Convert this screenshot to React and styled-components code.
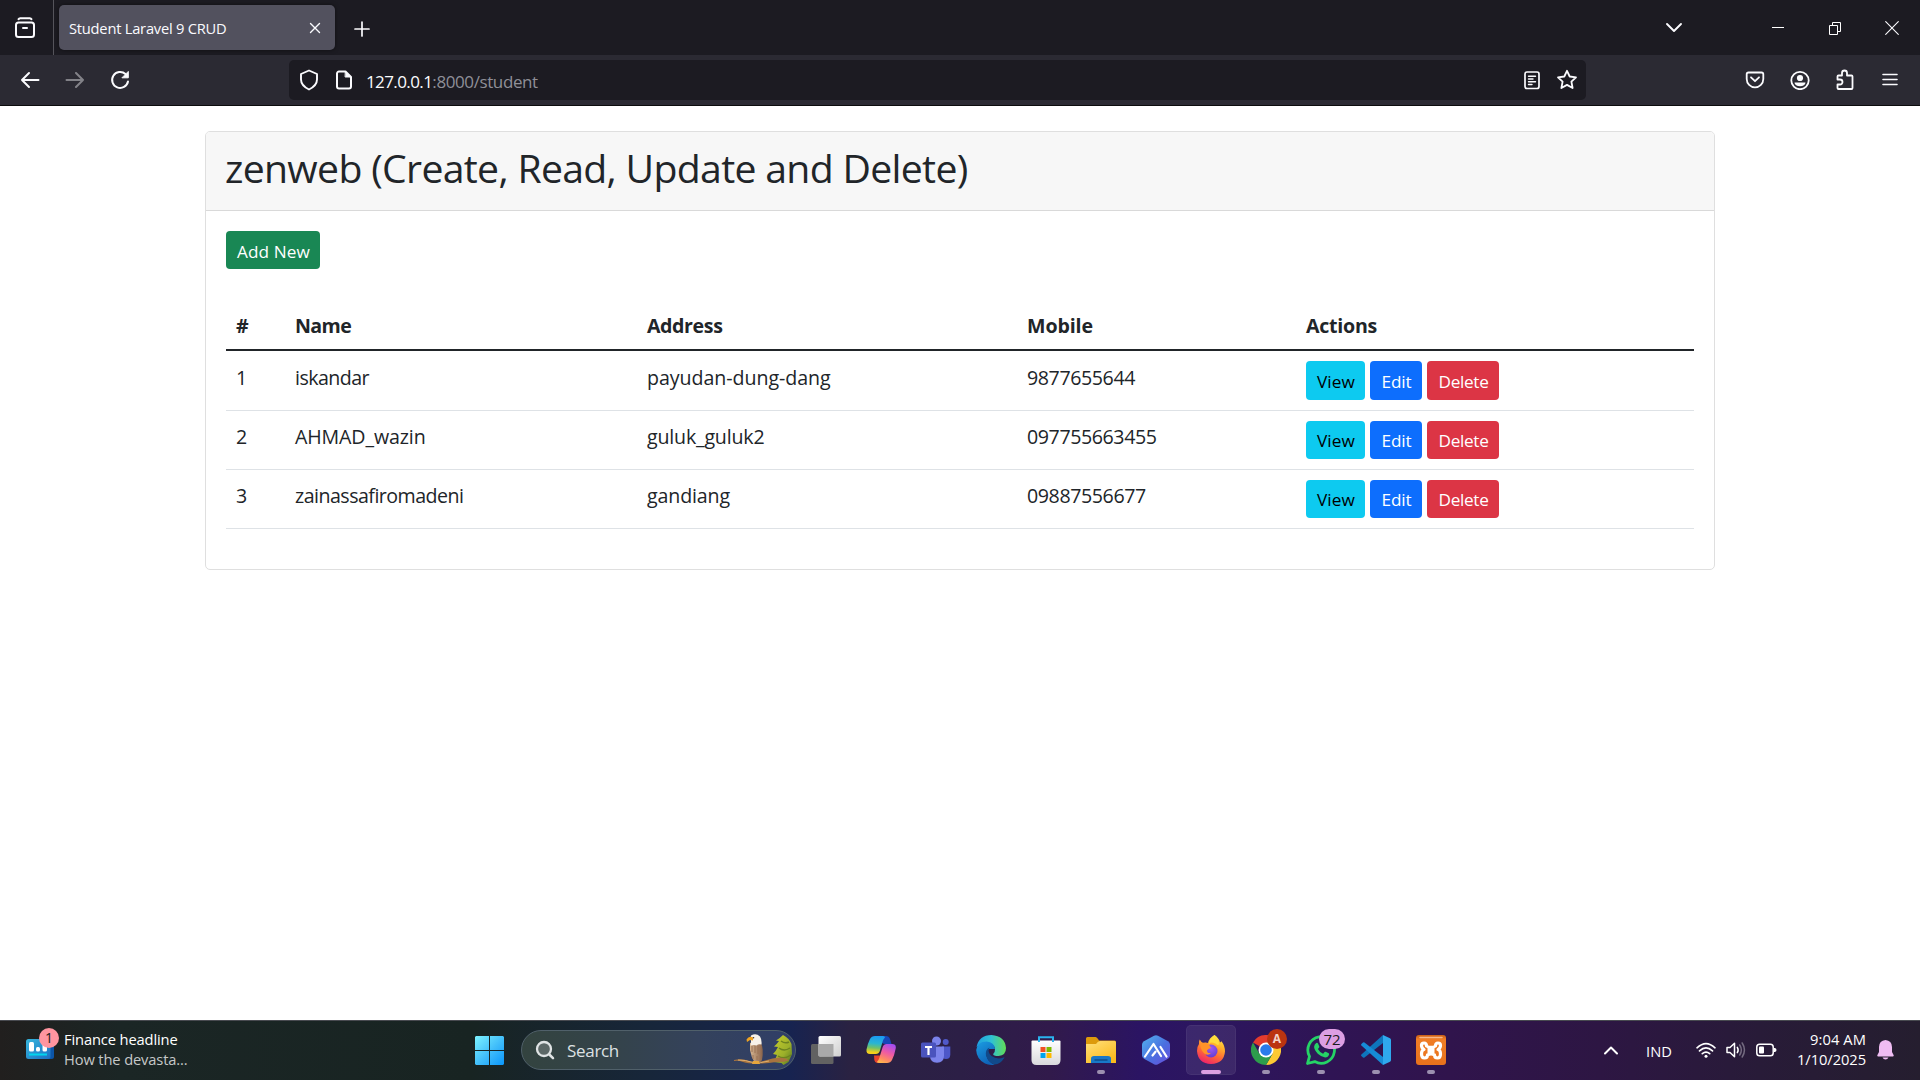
import React from "react";
import styled, { createGlobalStyle } from "styled-components";

const GlobalStyle = createGlobalStyle`
  * { box-sizing: border-box; }
  body {
    margin: 0;
    background: #fff;
    font-family: "Open Sans", "Noto Sans", sans-serif;
    overflow: hidden;
  }
  svg { display: block; flex: none; }
`;

const Screen = styled.div`
  display: flex;
  flex-direction: column;
  width: 1920px;
  height: 1080px;
`;

const Text = styled.span`
  letter-spacing: ${(p) => p.$track || 0}px;
  white-space: nowrap;
`;

/* ---------- Browser chrome ---------- */

const TabStrip = styled.header`
  display: flex;
  align-items: center;
  height: 55px;
  background: #1c1b22;
  color: #fbfbfe;
`;

const TabsOverview = styled.div`
  display: flex;
  align-items: center;
  justify-content: center;
  width: 54px;
  height: 55px;
  padding-right: 3px;
  border-right: 1px solid #55545b;
`;

const Tab = styled.div`
  display: flex;
  align-items: center;
  justify-content: space-between;
  width: 276px;
  height: 45px;
  margin-left: 5px;
  padding: 0 14px 0 10px;
  border-radius: 5px;
  background: #52515e;
  box-shadow: 0 0 4px rgba(0, 0, 0, 0.5);
  font-size: 14.7px;
`;

const NewTab = styled.div`
  display: flex;
  justify-content: center;
  width: 53px;
  padding-top: 2px;
`;

const WindowControls = styled.div`
  display: flex;
  align-items: center;
  margin-left: auto;
`;

const WindowButton = styled.div`
  display: flex;
  align-items: center;
  justify-content: center;
  width: ${(p) => p.$width || 57}px;
  height: 55px;
`;

const NavBar = styled.nav`
  display: flex;
  align-items: center;
  height: 51px;
  padding: 0 8px 0 7px;
  background: #2b2a33;
  border-bottom: 1px solid #0c0c0d;
  color: #fbfbfe;
`;

const NavButton = styled.div`
  display: flex;
  align-items: center;
  justify-content: center;
  width: 45px;
  height: 40px;
  opacity: ${(p) => (p.$disabled ? 0.42 : 1)};
`;

const AddressBar = styled.div`
  display: flex;
  align-items: center;
  width: 1297px;
  height: 40px;
  margin: 0 auto 0 147px;
  padding: 0 2px;
  border-radius: 5px;
  background: #1c1b22;
`;

const AddressIcon = styled.div`
  display: flex;
  align-items: center;
  justify-content: center;
  width: 35px;
`;

const Url = styled.div`
  flex: 1;
  padding: 4px 0 0 5px;
  font-size: 17px;
  line-height: 24px;
  color: #8f8f98;
`;

const Host = styled(Text)`
  color: #fbfbfe;
`;

/* ---------- Page ---------- */

const Page = styled.main`
  flex: 1;
  padding-top: 25px;
  color: #212529;
`;

const Card = styled.section`
  width: 1510px;
  height: 439px;
  margin: 0 auto;
  border: 1px solid #dfdfdf;
  border-radius: 5px;
`;

const CardHeader = styled.div`
  height: 79px;
  padding: 12px 19px 0;
  background: #f7f7f7;
  border-bottom: 1px solid #d9d9d9;
  border-radius: 4px 4px 0 0;
`;

const Title = styled.h2`
  margin: 0;
  font-size: 39.2px;
  font-weight: 400;
  line-height: 48px;
`;

const CardBody = styled.div`
  padding: 20px;
`;

const palette = {
  success: ["#198754", "#fff"],
  info: ["#0dcaf0", "#000"],
  primary: ["#0d6efd", "#fff"],
  danger: ["#dc3545", "#fff"],
};

const Button = styled.a`
  display: flex;
  align-items: center;
  justify-content: center;
  width: ${(p) => p.$width}px;
  height: ${(p) => p.$height || 38}px;
  padding: ${(p) => (p.$height > 38 ? 3 : 2)}px 0 0 1px;
  border-radius: 4px;
  background: ${(p) => palette[p.$kind][0]};
  color: ${(p) => palette[p.$kind][1]};
  font-size: 17.2px;
`;

const Table = styled.table`
  width: 1468px;
  margin-top: 30px;
  table-layout: fixed;
  border-collapse: separate;
  border-spacing: 0;
  font-size: 19.6px;
  line-height: 30px;
`;

const HeadCell = styled.th`
  width: ${(p) => p.$width}px;
  height: 52px;
  padding: 3px 10px 0;
  border-bottom: 2px solid #212529;
  text-align: left;
  font-weight: 700;
`;

const Row = styled.tr`
  height: ${(p) => p.$height}px;
`;

const Cell = styled.td`
  padding: ${(p) => p.$top}px 10px 0;
  border-bottom: 1px solid #dee2e6;
  vertical-align: top;
`;

const Actions = styled.div`
  display: flex;
  gap: 5px;
`;

/* ---------- Taskbar ---------- */

const Taskbar = styled.footer`
  display: flex;
  align-items: center;
  height: 60px;
  padding-bottom: 1px;
  border-top: 1px solid #484a50;
  background: linear-gradient(
    90deg,
    #211f1e 0,
    #1b2625 120px,
    #182422 470px,
    #17263a 650px,
    #172350 790px,
    #2a2242 850px,
    #2c1f46 960px,
    #311a4b 1050px,
    #2b1463 1140px,
    #2c1660 1200px,
    #2f1454 1330px,
    #30144c 1450px,
    #2d1643 1600px,
    #281b38 1760px,
    #251e2f 1920px
  );
  color: #fff;
`;

const Widget = styled.div`
  display: flex;
  align-items: center;
  width: 475px;
  padding-left: 26px;
`;

const WidgetIcon = styled.div`
  position: relative;
  width: 38px;
  height: 40px;
  padding-top: 9px;
`;

const Badge = styled.span`
  position: absolute;
  left: ${(p) => p.$left}px;
  top: ${(p) => p.$top}px;
  width: ${(p) => p.$width || 20}px;
  height: 20px;
  border-radius: 10px;
  background: ${(p) => p.$bg};
  color: ${(p) => p.$color || "#1b1b1b"};
  font-size: ${(p) => p.$size}px;
  font-weight: ${(p) => p.$weight || 400};
  line-height: 20px;
  text-align: center;
`;

const WidgetText = styled.div`
  display: flex;
  flex-direction: column;
  margin-top: -2px;
  font-size: 14.7px;
  line-height: 20px;
`;

const Muted = styled(Text)`
  color: #c5c8c8;
`;

const SearchBox = styled.div`
  display: flex;
  align-items: center;
  width: 275px;
  height: 40px;
  margin: 0 5px 0 17px;
  padding: 0 2px 0 13px;
  border: 1px solid #50606a;
  border-radius: 20px;
  background: linear-gradient(90deg, #33433f 0, #34434b 35%, #34425c 65%, #303e68 100%);
  color: #dde1e3;
  font-size: 17px;

  & > svg:last-child { margin-left: auto; }
`;

const SearchLabel = styled(Text)`
  padding: 1px 0 0 12px;
`;

const Apps = styled.div`
  display: flex;
  gap: 5px;
`;

const AppSlot = styled.div`
  position: relative;
  display: flex;
  align-items: center;
  justify-content: center;
  width: 50px;
  height: 50px;
  border-radius: 5px;
  background: ${(p) => (p.$active ? "rgba(255,255,255,0.08)" : "transparent")};
  box-shadow: ${(p) => (p.$active ? "inset 0 0 0 1px rgba(255,255,255,0.05)" : "none")};
`;

const Running = styled.span`
  position: absolute;
  bottom: 1px;
  left: ${(p) => (p.$active ? 15 : 21)}px;
  width: ${(p) => (p.$active ? 20 : 8)}px;
  height: 4px;
  border-radius: 2px;
  background: ${(p) => (p.$active ? "#dca0e2" : "#9c90b0")};
`;

const Tray = styled.div`
  display: flex;
  align-items: center;
  margin-left: auto;
  padding-right: 26px;
  font-size: 14.7px;
`;

const Language = styled(Text)`
  margin: 1px 24px 0 27px;
`;

const StatusIcons = styled.div`
  display: flex;
  align-items: center;
  gap: 10px;
`;

const Clock = styled.div`
  display: flex;
  flex-direction: column;
  align-items: flex-end;
  width: 89px;
  margin: -2px 11px 0 0;
  line-height: 20px;
`;

/* ---------- Icons ---------- */

const Stroke = ({ w = 20, h = 20, sw = 1.7, children }) => (
  <svg width={w} height={h} viewBox={`0 0 ${w} ${h}`} fill="none" stroke="currentColor" strokeWidth={sw} strokeLinecap="round" strokeLinejoin="round">
    {children}
  </svg>
);

const OverviewIcon = () => (
  <Stroke w={22} h={22} sw={2}>
    <path d="M4.5 2.2Q5 1.2 6.200 1.200H15.800Q17 1.200 17.500 2.200" />
    <rect x="2" y="5.500" width="18" height="14.500" rx="2.500" />
    <path d="M9 11h4" />
  </Stroke>
);

const BackIcon = () => (
  <Stroke sw={2}><path d="M18.500 10H2M9 3 2 10l7 7" /></Stroke>
);
const ForwardIcon = () => (
  <Stroke sw={2}><path d="M1.500 10H18M11 3l7 7-7 7" /></Stroke>
);
const ReloadIcon = () => (
  <Stroke sw={2}>
    <path d="M18 11.500A8 8 0 1 1 15.500 4" />
    <path d="M18.300 1.800v6h-6z" fill="currentColor" strokeWidth="1" />
  </Stroke>
);
const ShieldIcon = () => (
  <Stroke w={20} h={22} sw={1.9}>
    <path d="M10 1.500 18 5v5.500c0 4-3 7.500-8 10-5-2.500-8-6-8-10V5z" />
  </Stroke>
);
const PageIcon = () => (
  <Stroke w={18} h={20} sw={2}>
    <path d="M10.500 1.500H4A2 2 0 0 0 2 3.500v13a2 2 0 0 0 2 2h10a2 2 0 0 0 2-2V7z" />
    <path d="M10.500 1.500 16 7h-5.500z" fill="currentColor" strokeWidth="1" />
  </Stroke>
);
const ReaderIcon = () => (
  <Stroke w={18} h={20}>
    <rect x="2" y="2" width="14" height="16.500" rx="2" />
    <path d="M5.500 6.200h7M5.500 9h4.500M5.500 11.700h7M5.500 14.500h3.500" strokeWidth="1.400" />
  </Stroke>
);
const StarIcon = () => (
  <Stroke w={22} h={22} sw={1.8}>
    <path d="m11 1.800 2.700 5.700 6.300.8-4.600 4.300 1.200 6.400-5.600-3.100-5.600 3.100 1.200-6.400L2 8.300l6.300-.8z" />
  </Stroke>
);
const PocketIcon = () => (
  <Stroke sw={1.8}>
    <path d="M3.500 2.500h13a1.800 1.800 0 0 1 1.800 1.800V9a8.300 8.300 0 0 1-16.600 0V4.300a1.800 1.800 0 0 1 1.800-1.800z" />
    <path d="m6 7.300 4 3.900 4-3.900" />
  </Stroke>
);
const AccountIcon = () => (
  <Stroke w={20} h={20} sw={1.8}>
    <circle cx="10" cy="10.500" r="8.700" />
    <circle cx="10" cy="8" r="3.100" fill="currentColor" stroke="none" />
    <path d="M4.500 12.500h11a5.500 3.800 0 0 1-11 0z" fill="currentColor" stroke="none" />
  </Stroke>
);
const PuzzleIcon = () => (
  <Stroke w={20} h={22} sw={1.8}>
    <path d="M2.500 10.500V7.500Q2.500 6.500 3.500 6.500H7V4a2.500 2.500 0 0 1 5 0v2.500h4.500Q17.500 6.500 17.500 7.500v11.500Q17.500 20 16.500 20h-13Q2.500 20 2.500 19v-3.500H5a2.500 2.500 0 0 0 0-5z" />
  </Stroke>
);
const MenuIcon = () => (
  <Stroke w={18} h={16} sw={1.6}><path d="M2 2.500h14M2 7.500h14M2 12.500h14" /></Stroke>
);
const TabClose = () => (
  <Stroke w={12} h={12} sw={1.4}><path d="m1.500 1.500 9 9m0-9-9 9" /></Stroke>
);
const PlusIcon = () => (
  <Stroke w={16} h={16} sw={1.7}><path d="M8 1v14M1 8h14" /></Stroke>
);
const ChevronDown = () => (
  <Stroke w={18} h={12} sw={1.9}><path d="m2 2 7 7 7-7" /></Stroke>
);
const MinimizeIcon = () => (
  <svg width="14" height="14" viewBox="0 0 14 14"><path d="M1 6h12v1H1z" fill="#fff" /></svg>
);
const RestoreIcon = () => (
  <svg width="14" height="14" viewBox="0 0 14 14" fill="none" stroke="#fff">
    <path d="M1.500 4.500h8v9h-8zM4.500 4.500v-3h8v9h-3" />
  </svg>
);
const CloseIcon = () => (
  <Stroke w={14} h={14} sw={1.1}><path d="m.7.7 12.600 12.600m0-12.600L.7 13.300" /></Stroke>
);

const FinanceIcon = () => (
  <svg width="28" height="20" viewBox="0 0 28 20">
    <defs>
      <linearGradient id="fin" x1="0" y1="0" x2="1" y2="1">
        <stop offset="0" stopColor="#37b6dc" /><stop offset="1" stopColor="#1b6fc4" />
      </linearGradient>
    </defs>
    <rect x="15" y="1" width="13" height="19" rx="2.500" fill="#0b55a8" />
    <rect width="24.500" height="20" rx="2.500" fill="url(#fin)" />
    <rect x="3" y="3" width="5" height="9.500" rx="1.500" fill="#fff" />
    <rect x="10" y="8" width="4" height="4.500" rx="1.500" fill="#fff" />
    <rect x="16.500" y="5" width="4.500" height="7.500" rx="1.500" fill="#fff" />
    <rect x="3" y="14.500" width="18" height="2" fill="#00d5ee" />
  </svg>
);

const StartIcon = () => (
  <svg width="29" height="29" viewBox="0 0 29 29">
    <defs>
      <linearGradient id="win" x1="0" y1="0" x2="29" y2="29" gradientUnits="userSpaceOnUse">
        <stop offset="0" stopColor="#7df3ff" /><stop offset="0.550" stopColor="#3fbcfa" /><stop offset="1" stopColor="#0a96fb" />
      </linearGradient>
    </defs>
    <path d="M1 0h13v14H0V1zM15 0h13l1 1v13H15zM0 15h14v14H1l-1-1zM15 15h14v13l-1 1H15z" fill="url(#win)" />
  </svg>
);

const SearchIcon = () => (
  <svg width="20" height="20" viewBox="0 0 20 20" fill="none" stroke="#dfe3e4" strokeLinecap="round">
    <circle cx="9" cy="9" r="7" strokeWidth="2.300" fill="#5c6867" /><path d="m14.300 14.500 3.700 3.700" strokeWidth="2.500" />
  </svg>
);

const EagleArt = () => (
  <svg width="59" height="32" viewBox="0 0 59 32">
    <defs>
      <linearGradient id="tree" x1="0" y1="0" x2="1" y2="1">
        <stop offset="0" stopColor="#c8cc2c" /><stop offset="0.600" stopColor="#9cb02a" /><stop offset="1" stopColor="#55751f" />
      </linearGradient>
      <linearGradient id="wing" x1="0" y1="0" x2="1" y2="0">
        <stop offset="0" stopColor="#d6b591" /><stop offset="1" stopColor="#8a634a" />
      </linearGradient>
    </defs>
    <path d="M49 1Q45 5 42 6.500l3 .5Q43 10 40 12.500l4 .5Q42 17 39 20l4 1q-1.500 4-3.500 7l8 1 2 2 5-3 3.500-8-.500-10Q55 4 49 1z" fill="url(#tree)" />
    <path d="M47 7q4 3 8 1m-10 6q5 4 11 0m-12 8q6 4 13-1" stroke="#6d8220" strokeWidth="1.500" fill="none" />
    <path d="M0 26q8-2 15 1 7 3 16-.5 8-2.500 14-3 8 .5 10 3-7 2-13 1.500-10 2-20 1.500Q14 29.500 9 28q-5-2-9-1z" fill="#a8743f" />
    <path d="M4 26q8 0 13 2 8 2 18-1" stroke="#dfae6e" fill="none" strokeWidth="1" />
    <path d="M16 9q4-2 11 0 3 6 1 17l-2 3h-5q-4-6-5-13z" fill="url(#wing)" />
    <path d="M18 12v6m3-7v8m3-7v8m-5 1v4m4-3v4" stroke="#9a7354" strokeWidth="1" />
    <path d="M17 1.500q5-3 9 1 2 3 1.500 8-3-1-5 1-3-1-6 0 1-4 0-7z" fill="#f8f2e9" />
    <path d="M19 3.500q-4-2-6.500 2l.5 2.500 3-2 3 .5z" fill="#efa321" />
    <circle cx="19.500" cy="3.700" r=".8" fill="#4a3420" />
    <path d="M19 27h6l1 3h-8z" fill="#e6a53c" />
  </svg>
);

const TaskViewIcon = () => (
  <svg width="30" height="30" viewBox="0 0 30 30">
    <defs>
      <linearGradient id="tv" x1="0" y1="0" x2="1" y2="1">
        <stop offset="0" stopColor="#fff" /><stop offset="1" stopColor="#cfcfcf" />
      </linearGradient>
    </defs>
    <rect x="0" y="9" width="22.500" height="20" rx="1.500" fill="#626262" />
    <rect x="7.500" y="1" width="22.500" height="20.500" rx="1.500" fill="url(#tv)" />
    <rect x="7.500" y="9" width="15" height="12" fill="#a9a9a9" />
  </svg>
);

const CopilotIcon = () => (
  <svg width="30" height="30" viewBox="0 0 30 30">
    <defs>
      <linearGradient id="cpA" x1="0.400" y1="0" x2="0.300" y2="1">
        <stop offset="0" stopColor="#1b9af2" /><stop offset="0.400" stopColor="#29b5d2" /><stop offset="0.650" stopColor="#6fc16a" /><stop offset="0.900" stopColor="#f3cf1c" />
      </linearGradient>
      <linearGradient id="cpB" x1="0.700" y1="0" x2="0.300" y2="1">
        <stop offset="0" stopColor="#a44df0" /><stop offset="0.450" stopColor="#ee5aa5" /><stop offset="0.800" stopColor="#ff8a63" /><stop offset="1" stopColor="#ffb54e" />
      </linearGradient>
    </defs>
    <path d="M16 1h4q3 0 4 3l1.500 5H19q-3 0-4-3z" fill="#1746b8" />
    <path d="M8 20.500h7l-1 5q-1 2.500-3 2.500-2 0-2.700-3z" fill="#e8432e" />
    <path d="M9 1h8q2 0 2 1.500-1.500 1-2.200 3.500l-3 10q-1 3-4 3H4q-4 0-3.500-4.500Q1.500 9 4 4 5.500 1 9 1z" fill="url(#cpA)" />
    <path d="M21 28h-8q-2 0-2-1.200 1.500-1 2.200-3.500l3.500-11.300q1-3 4-3H26q4.500 0 3.700 4.500Q28.500 20 26 25q-1.500 3-5 3z" fill="url(#cpB)" />
  </svg>
);

const TeamsIcon = () => (
  <svg width="30" height="30" viewBox="0 0 30 30">
    <circle cx="24.700" cy="7" r="3" fill="#5059c9" />
    <path d="M21 11.500h8.300v8q0 4.500-4.300 4.500-4 0-4-4z" fill="#4d57c8" />
    <circle cx="15.500" cy="6" r="4.500" fill="#7b83eb" />
    <path d="M9 11.500h14v9q0 7-7 7.300-7-.3-7-7z" fill="#7b83eb" />
    <rect x="0" y="7.500" width="15" height="15" rx="1.500" fill="#4a53bd" />
    <path d="M4 11h7v2H8.600v7H6.400v-7H4z" fill="#fff" />
  </svg>
);

const EdgeIcon = () => (
  <svg width="30" height="30" viewBox="0 0 30 30">
    <defs>
      <linearGradient id="edA" x1="0" y1="0.500" x2="1" y2="0.500">
        <stop offset="0" stopColor="#1f9fe0" /><stop offset="0.500" stopColor="#2fc1d4" /><stop offset="1" stopColor="#62dc55" />
      </linearGradient>
      <linearGradient id="edB" x1="0" y1="0" x2="0.500" y2="1">
        <stop offset="0" stopColor="#1b9de2" /><stop offset="1" stopColor="#0f63b8" />
      </linearGradient>
    </defs>
    <path d="M.5 12Q3 0 15.500 0 29 1 30 13q0 7.500-7.500 8-5.500 0-5.300-2 2-2 1.800-5-.5-4.500-6-5Q4 7.500.5 12z" fill="url(#edA)" />
    <path d="M.2 15Q1 6.500 10.500 6.500q8 .5 8.500 7.500h-6q-4.500 4-1.500 9.500 2 4 7 6.200Q13 30.500 9 28.500.5 24 .2 15z" fill="url(#edB)" />
    <path d="M13.500 12.500q-4.500 2-3.500 8 2 7 8.500 9 6-.5 9.800-6.500.3-1-.8-.5-6.500 2.500-12-1.500-4.500-4-2-8.500z" fill="#114a8b" />
  </svg>
);

const StoreIcon = () => (
  <svg width="30" height="30" viewBox="0 0 30 30">
    <defs>
      <linearGradient id="st" x1="0" y1="0" x2="0" y2="1"><stop offset="0" stopColor="#fff" /><stop offset="1" stopColor="#d9d9dc" /></linearGradient>
    </defs>
    <path d="M.5 6.500q0-1 1-1h27q1 0 1 1V25q0 5-5 5h-19q-5 0-5-5z" fill="url(#st)" />
    <path d="M8 7V2.200h14V7" stroke="#2ab2ee" strokeWidth="2" fill="none" />
    <path d="M9.500 12h5v5h-5z" fill="#f25022" /><path d="M15.500 12h5v5h-5z" fill="#7fba00" />
    <path d="M9.500 18h5v5h-5z" fill="#00a4ef" /><path d="M15.500 18h5v5h-5z" fill="#ffb900" />
  </svg>
);

const FolderIcon = () => (
  <svg width="30" height="30" viewBox="0 0 30 30">
    <defs>
      <linearGradient id="fo" x1="0" y1="0" x2="0.700" y2="1"><stop offset="0" stopColor="#ffe07c" /><stop offset="1" stopColor="#fbbb1c" /></linearGradient>
    </defs>
    <path d="M0 3.500Q0 2 1.500 2h8Q11 2 13 5.500h15.500Q30 5.500 30 7v6H0z" fill="#dd9a0c" />
    <path d="M0 9h10q2-3 4-3h14.500Q30 6 30 7.500v20.500H0z" fill="url(#fo)" />
    <path d="M5 28v-4.500Q5 21 8 21h14q3 0 3 2.500V28z" fill="#1878c8" />
    <path d="M8.500 25h13" stroke="#0c4d8c" strokeWidth="1.500" />
  </svg>
);

const HexIcon = () => (
  <svg width="30" height="30" viewBox="0 0 30 30">
    <defs>
      <linearGradient id="hx" x1="0" y1="0" x2="1" y2="1"><stop offset="0" stopColor="#53b5ee" /><stop offset="0.550" stopColor="#4a6fe0" /><stop offset="1" stopColor="#6a4bdb" /></linearGradient>
    </defs>
    <path d="M13 .7q2-1 4 0l10 5.600q2 1.200 2 3.200v11q0 2-2 3.200l-10 5.600q-2 1-4 0L3 23.700q-2-1.200-2-3.200v-11q0-2 2-3.200z" fill="url(#hx)" />
    <path d="m4 21.500 8.500-12.500 7.500 12M11.500 20.500l3-3.800M19.500 12l6 9.500" stroke="#fff" strokeWidth="2.200" strokeLinecap="round" strokeLinejoin="round" fill="none" />
  </svg>
);

const FirefoxIcon = () => (
  <svg width="30" height="30" viewBox="0 0 30 30">
    <defs>
      <linearGradient id="ff" x1="0.800" y1="0" x2="0.350" y2="1">
        <stop offset="0" stopColor="#fff04a" /><stop offset="0.350" stopColor="#ffb02b" /><stop offset="0.650" stopColor="#ff6a36" /><stop offset="1" stopColor="#ee2469" />
      </linearGradient>
      <radialGradient id="fp" cx="0.500" cy="0.300" r="0.800"><stop offset="0" stopColor="#a05af0" /><stop offset="1" stopColor="#5a3ad0" /></radialGradient>
    </defs>
    <path d="M18.500 0q4.500 3 5.500 7.500l1.500-1.200Q29 11 29 16.500 28 28.500 15 29 2 28.500 1 16 1 11.500 3 9q-.2-3 .7-4.500Q5 7 7 7.800q3.500-.6 5 .2 1-5 6.500-8z" fill="url(#ff)" />
    <circle cx="15" cy="16" r="6.500" fill="url(#fp)" />
    <path d="M4 9q5-2 9 .5L15 13q-3 .5-4 2.500 0 3 4 2.500-2.500 3-6 1-4-2.500-5-10z" fill="#ff9328" />
    <path d="M18.500 0q4 4 4.500 9-1 2-3.500-.5-5-2-6.500.500Q13 3.500 18.500 0z" fill="#ffdd3c" />
  </svg>
);

const ChromeIcon = () => (
  <svg width="30" height="30" viewBox="0 0 30 30">
    <path d="M15 15 2 7.500A15 15 0 0 1 28 7.500H15z" fill="#e33b2e" />
    <path d="M15 7.500h13A15 15 0 0 1 15 30l6.500-11.200z" fill="#fcc934" />
    <path d="M2 7.500A15 15 0 0 0 15 30l6.500-11.200L15 15l-6.500 3.800z" fill="#2d9c4c" />
    <circle cx="15" cy="15" r="7.500" fill="#fff" />
    <circle cx="15" cy="15" r="5.800" fill="#2b7bea" />
  </svg>
);

const WhatsAppIcon = () => (
  <svg width="30" height="30" viewBox="0 0 30 30">
    <path d="m1.500 28.500 2-7.200A13.300 13.300 0 1 1 8.800 26.600z" fill="#2d1a58" stroke="#25d366" strokeWidth="2.800" strokeLinejoin="round" />
    <path d="M10.300 8q1-.6 1.700.4l1.300 3q.2.800-.4 1.400l-1 1.200q1.700 3.200 5.200 4.700l1.500-1.700q.5-.5 1.200-.2l2.900 1.400q.6.400.4 1.200-.9 3-4 3-3.600-.2-7.300-3.600-3.700-3.900-3.700-7Q8.400 9 10.300 8z" fill="#25d366" />
  </svg>
);

const CodeIcon = () => (
  <svg width="30" height="30" viewBox="0 0 30 30">
    <path d="M22 0 29 3.200q1 .5 1 1.800v20q0 1.300-1 1.800L22 30z" fill="#2fa9ee" />
    <path d="M22 0v8L3.500 22.500q-.8.500-1.500 0L.4 21q-.7-.8 0-1.600z" fill="#0e75bd" />
    <path d="M22 30v-8L3.500 7.500Q2.700 7 2 7.500L.4 9q-.7.800 0 1.600z" fill="#168bd6" />
  </svg>
);

const XamppIcon = () => (
  <svg width="30" height="30" viewBox="0 0 30 30">
    <defs><linearGradient id="xa" x1="0" y1="0" x2="0" y2="1"><stop offset="0" stopColor="#c95f16" /><stop offset="0.150" stopColor="#f07d25" /><stop offset="1" stopColor="#e8721c" /></linearGradient></defs>
    <rect width="30" height="30" rx="3" fill="url(#xa)" />
    <path d="M4 2.500h22" stroke="#f7b887" strokeWidth="1.500" strokeLinecap="round" />
    <path d="M10.500 11q0-3-2.500-3t-2.500 2.500T8 14.500q-2.500.5-2.500 4.500t3 4q3 0 3-3 3.500-2 7 0 0 3 3 3t3-4q0-4-2.500-4.500Q24.500 13 24.500 10.500T22 8t-2.500 3q-4.500 3-9 0z" fill="none" stroke="#fff" strokeWidth="3.200" strokeLinejoin="round" />
    <path d="M11.500 15.500h7" stroke="#fff" strokeWidth="5" />
  </svg>
);

const ChevronUp = () => (
  <Stroke w={16} h={10} sw={2}><path d="m2 8.500 6-6 6 6" /></Stroke>
);
const WifiIcon = () => (
  <svg width="20" height="18" viewBox="0 0 20 18" fill="none" stroke="#fff" strokeWidth="1.600" strokeLinecap="round">
    <path d="M1 6.800q9-8.500 18 0M3.500 9.900q6.500-6 13 0M6.300 12.700q3.700-3.300 7.400 0" />
    <circle cx="10" cy="15.300" r="1.500" fill="#fff" stroke="none" />
  </svg>
);
const VolumeIcon = () => (
  <svg width="20" height="18" viewBox="0 0 20 18" fill="none" stroke="#fff" strokeWidth="1.500" strokeLinecap="round" strokeLinejoin="round">
    <path d="M1 6.500h3L8.500 2.300v13.400L4 11.500H1z" />
    <path d="M11.300 6.300q1.700 2.700 0 5.400" />
    <path d="M13.700 4q3.300 5 0 10M16.200 2q4.500 7 0 14" stroke="#746b80" />
  </svg>
);
const BatteryIcon = () => (
  <svg width="21" height="14" viewBox="0 0 21 14" fill="none">
    <rect x=".8" y="1.300" width="16.400" height="11.400" rx="2.800" stroke="#fff" strokeWidth="1.500" />
    <rect x="3" y="3.500" width="5" height="7" rx="1" fill="#fff" />
    <path d="M18 5h1q1.500.3 1.500 2T19 9h-1z" fill="#fff" />
  </svg>
);
const BellIcon = () => (
  <svg width="17" height="20" viewBox="0 0 17 20" fill="#efbcf2">
    <path d="M8.500 0q6.300.5 6.500 7v5l1.700 3.300q.3 1-.7 1.200H1Q0 16.300.3 15.300L2 12V7Q2.200.5 8.500 0zM5.500 17.500h6q-1 2-3 2t-3-2z" />
  </svg>
);

/* ---------- Data ---------- */

const columns = [
  { label: "#", width: 59 },
  { label: "Name", width: 352, track: -0.6 },
  { label: "Address", width: 380, track: -0.4 },
  { label: "Mobile", width: 279, track: -0.09 },
  { label: "Actions", width: 398, track: -0.26 },
];

const students = [
  { height: 60, top: 12, button: 39, cells: [["1"], ["iskandar", -0.55], ["payudan-dung-dang", -0.05], ["9877655644", -0.4]] },
  { height: 59, top: 11, button: 38, cells: [["2"], ["AHMAD_wazin", -0.12], ["guluk_guluk2", -0.18], ["097755663455", -0.41]] },
  { height: 59, top: 11, button: 38, cells: [["3"], ["zainassafiromadeni", -0.52], ["gandiang", -0.13], ["09887556677", -0.4]] },
];

const apps = [
  { name: "taskview", Icon: TaskViewIcon },
  { name: "copilot", Icon: CopilotIcon },
  { name: "teams", Icon: TeamsIcon },
  { name: "edge", Icon: EdgeIcon },
  { name: "store", Icon: StoreIcon },
  { name: "explorer", Icon: FolderIcon, running: true },
  { name: "hex", Icon: HexIcon },
  { name: "firefox", Icon: FirefoxIcon, running: true, active: true },
  { name: "chrome", Icon: ChromeIcon, running: true, badge: { text: "A", left: 26, top: 4, bg: "#bb3410", color: "#f3d3c8", size: 12, weight: 700 } },
  { name: "whatsapp", Icon: WhatsAppIcon, running: true, badge: { text: "72", left: 23, top: 4, width: 26, bg: "#dc9fe3", size: 15 } },
  { name: "code", Icon: CodeIcon, running: true },
  { name: "xampp", Icon: XamppIcon, running: true },
];

export default function App() {
  return (
    <Screen>
      <GlobalStyle />
      <TabStrip>
        <TabsOverview><OverviewIcon /></TabsOverview>
        <Tab>
          <Text $track={-0.23}>Student Laravel 9 CRUD</Text>
          <TabClose />
        </Tab>
        <NewTab><PlusIcon /></NewTab>
        <WindowControls>
          <WindowButton $width={150}><ChevronDown /></WindowButton>
          <WindowButton><MinimizeIcon /></WindowButton>
          <WindowButton><RestoreIcon /></WindowButton>
          <WindowButton><CloseIcon /></WindowButton>
        </WindowControls>
      </TabStrip>

      <NavBar>
        <NavButton><BackIcon /></NavButton>
        <NavButton $disabled><ForwardIcon /></NavButton>
        <NavButton><ReloadIcon /></NavButton>
        <AddressBar>
          <AddressIcon><ShieldIcon /></AddressIcon>
          <AddressIcon><PageIcon /></AddressIcon>
          <Url><Host $track={-0.6}>127.0.0.1</Host><Text $track={-0.4}>:8000/student</Text></Url>
          <AddressIcon><ReaderIcon /></AddressIcon>
          <AddressIcon><StarIcon /></AddressIcon>
        </AddressBar>
        <NavButton><PocketIcon /></NavButton>
        <NavButton><AccountIcon /></NavButton>
        <NavButton><PuzzleIcon /></NavButton>
        <NavButton><MenuIcon /></NavButton>
      </NavBar>

      <Page>
        <Card>
          <CardHeader>
            <Title><Text $track={-0.68}>zenweb (Create, Read, Update and Delete)</Text></Title>
          </CardHeader>
          <CardBody>
            <Button $kind="success" $width={94}><Text $track={0.1}>Add New</Text></Button>
            <Table>
              <thead>
                <tr>
                  {columns.map((c) => (
                    <HeadCell key={c.label} $width={c.width}><Text $track={c.track}>{c.label}</Text></HeadCell>
                  ))}
                </tr>
              </thead>
              <tbody>
                {students.map((s) => (
                  <Row key={s.cells[0][0]} $height={s.height}>
                    {s.cells.map(([value, track]) => (
                      <Cell key={value} $top={s.top}><Text $track={track}>{value}</Text></Cell>
                    ))}
                    <Cell $top={10}>
                      <Actions>
                        <Button $kind="info" $width={59} $height={s.button}><Text $track={0.1}>View</Text></Button>
                        <Button $kind="primary" $width={52} $height={s.button}><Text $track={-0.13}>Edit</Text></Button>
                        <Button $kind="danger" $width={72} $height={s.button}><Text $track={-0.31}>Delete</Text></Button>
                      </Actions>
                    </Cell>
                  </Row>
                ))}
              </tbody>
            </Table>
          </CardBody>
        </Card>
      </Page>

      <Taskbar>
        <Widget>
          <WidgetIcon>
            <FinanceIcon />
            <Badge $left={13} $top={-2} $bg="#ff95a0" $size={14}>1</Badge>
          </WidgetIcon>
          <WidgetText>
            <Text $track={-0.13}>Finance headline</Text>
            <Muted $track={-0.13}>How the devasta...</Muted>
          </WidgetText>
        </Widget>
        <StartIcon />
        <SearchBox>
          <SearchIcon />
          <SearchLabel $track={-0.31}>Search</SearchLabel>
          <EagleArt />
        </SearchBox>
        <Apps>
          {apps.map(({ name, Icon, running, active, badge }) => (
            <AppSlot key={name} $active={active}>
              <Icon />
              {badge && (
                <Badge $left={badge.left} $top={badge.top} $width={badge.width} $bg={badge.bg} $color={badge.color} $size={badge.size} $weight={badge.weight}>
                  {badge.text}
                </Badge>
              )}
              {running && <Running $active={active} />}
            </AppSlot>
          ))}
        </Apps>
        <Tray>
          <ChevronUp />
          <Language $track={0.06}>IND</Language>
          <StatusIcons>
            <WifiIcon />
            <VolumeIcon />
            <BatteryIcon />
          </StatusIcons>
          <Clock>
            <Text $track={0.09}>9:04 AM</Text>
            <Text $track={-0.06}>1/10/2025</Text>
          </Clock>
          <BellIcon />
        </Tray>
      </Taskbar>
    </Screen>
  );
}
